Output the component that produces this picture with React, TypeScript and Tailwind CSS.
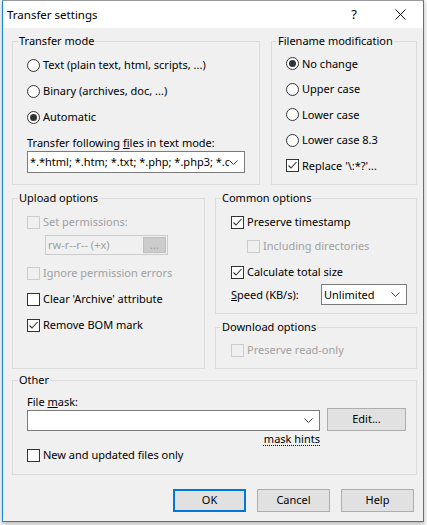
import React from 'react'

const FONT = "font-['Noto_Sans',sans-serif]"

interface GroupProps {
  title: string
  className?: string
  children: React.ReactNode
}

// Windows-style group box: border with caption sitting on the top edge
const Group: React.FC<GroupProps> = ({ title, className = '', children }) => (
  <fieldset className={`border border-[#dcdcdc] ${className}`}>
    <legend className="ml-[5px] px-[1px] h-4 leading-4">{title}</legend>
    {children}
  </fieldset>
)

const Check: React.FC<{ checked?: boolean; disabled?: boolean }> = ({ checked, disabled }) => (
  <span
    className={`w-[13px] h-[13px] border shrink-0 flex items-center justify-center ${
      disabled ? 'border-[#cccccc] bg-[#f0f0f0]' : 'border-[#333333] bg-white'
    }`}
  >
    {checked && (
      <svg width="11" height="11" viewBox="0 0 11 11">
        <path d="M1.5 5.5 L4 8 L9.5 2" fill="none" stroke="#333333" strokeWidth="1.1" />
      </svg>
    )}
  </span>
)

const Radio: React.FC<{ checked?: boolean }> = ({ checked }) => (
  <svg width="13" height="13" viewBox="0 0 13 13" className="shrink-0">
    <circle cx="6.5" cy="6.5" r="6" fill="#ffffff" stroke="#333333" strokeWidth="1" />
    {checked && <circle cx="6.5" cy="6.5" r="3.5" fill="#333333" />}
  </svg>
)

interface RowProps {
  label: React.ReactNode
  checked?: boolean
  disabled?: boolean
  radio?: boolean
  className?: string
}

const OptionRow: React.FC<RowProps> = ({ label, checked, disabled, radio, className = 'h-[26px]' }) => (
  <div className={`flex items-center gap-[3px] ${className} ${disabled ? 'text-[#a0a0a0]' : 'text-black'}`}>
    {radio ? <Radio checked={checked} /> : <Check checked={checked} disabled={disabled} />}
    <span className="whitespace-nowrap leading-4">{label}</span>
  </div>
)

const Chevron = () => (
  <svg width="9" height="5" viewBox="0 0 9 5" className="shrink-0">
    <path d="M0.5 0.5 L4.5 4.5 L8.5 0.5" fill="none" stroke="#404040" strokeWidth="1" />
  </svg>
)

const Combo: React.FC<{ value?: string; className: string }> = ({ value = '', className }) => (
  <div className={`flex items-center border border-[#7a7a7a] bg-white pl-[2px] pr-[6px] ${className}`}>
    <span className="flex-1 overflow-hidden whitespace-nowrap leading-4 pr-[3px]">{value}</span>
    <Chevron />
  </div>
)

const Button: React.FC<{ label: string; primary?: boolean; className?: string }> = ({
  label,
  primary,
  className = 'w-[73px] h-[23px]',
}) => (
  <div
    className={`flex items-center justify-center bg-[#e1e1e1] ${
      primary ? 'border-2 border-[#0078d7]' : 'border border-[#adadad]'
    } ${className}`}
  >
    {label}
  </div>
)

export default function App() {
  return (
    <div className={`w-[427px] h-[525px] bg-[#f6f6f6] overflow-hidden text-[11px] text-black ${FONT}`}>
      <div className="ml-[2px] w-[422px] h-[522px] border border-[#1883d7] border-t-[#9a9a9a] bg-[#f0f0f0] flex flex-col shadow-[0_2px_4px_rgba(0,0,0,0.25)]">
        {/* title bar */}
        <div className="h-[27px] bg-white flex items-center shrink-0">
          <span className="pl-[4px] flex-1 text-[11.5px]">Transfer settings</span>
          <div className="w-[46px] h-full flex items-center justify-center text-[13px]">?</div>
          <div className="w-[46px] h-full flex items-center justify-center">
            <svg width="11" height="11" viewBox="0 0 11 11">
              <path d="M0.5 0.5 L10.5 10.5 M10.5 0.5 L0.5 10.5" stroke="#111111" strokeWidth="1" />
            </svg>
          </div>
        </div>

        <div className="flex flex-col pl-[9px] pt-[5px]">
          <div className="flex gap-[11px]">
            <Group title="Transfer mode" className="w-[248px] h-[152px]">
              <div className="pl-[14px] pt-[3px]">
                <OptionRow radio label="Text (plain text, html, scripts, ...)" />
                <OptionRow radio label="Binary (archives, doc, ...)" />
                <OptionRow radio checked label="Automatic" />
                <div className="mt-[5px] leading-4 whitespace-nowrap">
                  Transfer following <span className="underline">f</span>iles in text mode:
                </div>
                <Combo
                  className="w-[218px] h-[22px]"
                  value="*.*html; *.htm; *.txt; *.php; *.php3; *.cgi; *.c; *.cpp; *.h; *.pas"
                />
              </div>
            </Group>
            <Group title="Filename modification" className="w-[146px] h-[152px]">
              <div className="pl-[14px] pt-[2px]">
                <OptionRow radio checked label="No change" className="h-[25.5px]" />
                <OptionRow radio label="Upper case" className="h-[25.5px]" />
                <OptionRow radio label="Lower case" className="h-[25.5px]" />
                <OptionRow radio label="Lower case 8.3" className="h-[25.5px]" />
                <OptionRow checked label="Replace '\:*?'..." className="h-[25.5px]" />
              </div>
            </Group>
          </div>

          <div className="flex gap-[10px] mt-[5px]">
            <Group title="Upload options" className="w-[193px] h-[179px]">
              <div className="pl-[14px] pt-[3px]">
                <OptionRow disabled label="Set permissions:" />
                <div className="ml-[18px] w-[123px] h-[20px] border border-[#cccccc] flex items-center pl-[2px] pr-[1px] text-[#a0a0a0]">
                  <span className="flex-1 whitespace-nowrap leading-4">rw-r--r-- (+x)</span>
                  <div className="w-[23px] h-[16px] bg-[#cccccc] border border-[#bfbfbf] flex items-center justify-center leading-4">
                    ...
                  </div>
                </div>
                <div className="mt-[5px]">
                  <OptionRow disabled label="Ignore permission errors" />
                  <OptionRow label="Clear 'Archive' attribute" />
                  <OptionRow checked label="Remove BOM mark" />
                </div>
              </div>
            </Group>

            <div className="flex flex-col">
              <Group title="Common options" className="w-[202px] h-[124px]">
                <div className="pl-[15px] pt-[3px]">
                  <OptionRow checked label="Preserve timestamp" />
                  <OptionRow disabled label="Including directories" className="h-[22px] ml-[16px]" />
                  <OptionRow checked label="Calculate total size" className="h-[22px] mt-[4px]" />
                  <div className="flex items-center h-[21px] mt-[1px]">
                    <span className="w-[90px] leading-4 whitespace-nowrap">
                      <span className="underline">S</span>peed (KB/s):
                    </span>
                    <Combo className="w-[86px] h-[21px]" value="Unlimited" />
                  </div>
                </div>
              </Group>
              <Group title="Download options" className="w-[202px] h-[50px] mt-[5px]">
                <div className="pl-[15px] pt-[2px]">
                  <OptionRow disabled label="Preserve read-only" />
                </div>
              </Group>
            </div>
          </div>

          <Group title="Other" className="w-[405px] h-[103px] mt-[3px]">
            <div className="pl-[14px] pt-[6px]">
              <div className="leading-4">
                File <span className="underline">m</span>ask:
              </div>
              <div className="flex items-end gap-[7px] -mt-[2px]">
                <Combo className="w-[293px] h-[21px]" />
                <Button label="Edit..." className="w-[79px] h-[23px]" />
              </div>
              <div className="w-[293px] text-right leading-4">
                <span className="underline decoration-dotted underline-offset-2">mask hints</span>
              </div>
              <OptionRow label="New and updated files only" className="h-[16px]" />
            </div>
          </Group>

          <div className="flex justify-end gap-[11px] pr-[9px] mt-[14px]">
            <Button label="OK" primary />
            <Button label="Cancel" />
            <Button label="Help" />
          </div>
        </div>
      </div>
    </div>
  )
}
